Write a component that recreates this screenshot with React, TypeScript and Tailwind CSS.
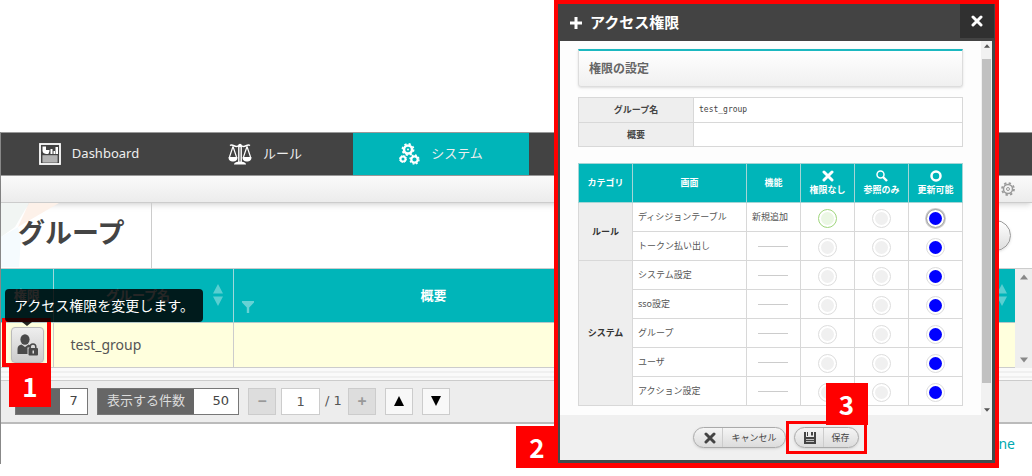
import type { ReactNode } from 'react'

const tabs = [
  { label: 'Dashboard', icon: <DashboardIcon />, active: false },
  { label: 'ルール', icon: <ScalesIcon />, active: false },
  { label: 'システム', icon: <GearsIcon />, active: true },
]

const groups = [
  { category: 'ルール', screens: ['ディシジョンテーブル', 'トークン払い出し'] },
  { category: 'システム', screens: ['システム設定', 'sso設定', 'グループ', 'ユーザ', 'アクション設定'] },
]

const levels = ['権限なし', '参照のみ', '更新可能']

function DashboardIcon() {
  return (
    <svg width="22" height="22" viewBox="0 0 22 22" fill="none">
      <rect x="1" y="1" width="20" height="20" stroke="#fff" strokeWidth="1.8" />
      <path d="M3.500 3.500h3.500v3.500h3.500a3.500 3.500 0 0 1-7 .5z" fill="#fff" />
      <path d="M6.500 11c0-2 1-3 3-3v3zM11.500 6h2v5h-2zM14.500 8h1.500v3h-1.500zM16.500 4h2.500v7h-2.500z" fill="#fff" />
      <path d="M3.500 12.500h15v6.500h-15z" fill="#999" />
      <path d="M3.500 13h15M3.500 15h15M3.500 17h15M3.500 19h15" stroke="#ccc" strokeWidth="1" />
    </svg>
  )
}

function ScalesIcon() {
  return (
    <svg width="24" height="22" viewBox="0 0 24 22" fill="none" stroke="#fff" strokeWidth="1.500">
      <path d="M2 2.500c3-2 5 2.500 8 .5h4c3 2 5-2.500 8-.5" />
      <circle cx="12" cy="2.500" r="1.800" fill="#fff" stroke="none" />
      <path d="M10.800 3v16M13.200 3v16" strokeWidth="1.400" />
      <path d="M5 3.500 1.500 14M5 3.500 8.500 14M19 3.500 15.500 14M19 3.500 22.500 14" strokeWidth="1.200" />
      <path d="M.5 14h9c0 3.500-2 4.500-4.500 4.500S.5 17.500.5 14zM14.500 14h9c0 3.500-2 4.500-4.500 4.500s-4.500-1-4.500-4.500z" fill="#fff" stroke="none" />
      <path d="M6 21.500c0-2 3-3 6-3s6 1 6 3z" fill="#fff" stroke="none" />
    </svg>
  )
}

function GearsIcon() {
  return (
    <svg width="21" height="22" viewBox="0 0 21 22" fill="none" stroke="#fff">
      <circle cx="9" cy="6.500" r="4" strokeWidth="2.500" />
      <circle cx="9" cy="6.500" r="5.600" strokeWidth="1.700" strokeDasharray="2.200 2.200" />
      <circle cx="9" cy="6.500" r="1" fill="#fff" stroke="none" />
      <circle cx="4" cy="16" r="2.500" strokeWidth="2" />
      <circle cx="4" cy="16" r="3.500" strokeWidth="1" strokeDasharray="1.400 1.350" />
      <circle cx="15.500" cy="16.500" r="3.200" strokeWidth="2.200" />
      <circle cx="15.500" cy="16.500" r="4.500" strokeWidth="1.400" strokeDasharray="1.800 1.740" />
    </svg>
  )
}

function UserLockIcon() {
  return (
    <svg width="22" height="22" viewBox="0 0 22 22" fill="#4a4a4a">
      <ellipse cx="8" cy="5.500" rx="4.600" ry="5.200" />
      <path d="M.5 20v-5c0-3 2-4 4-4.500L8 13l3.500-2.500 1.500.5v2.500h-2.500V20z" />
      <path d="M13.200 14.500v-1.700a2.800 2.800 0 0 1 5.600 0v1.700" fill="none" stroke="#4a4a4a" strokeWidth="1.500" />
      <rect x="11.500" y="14" width="9.500" height="7.500" rx="1" />
      <path d="M15.500 16.500h1.500v3h-1.500z" fill="#ddd" />
    </svg>
  )
}

function SettingIcon() {
  return (
    <svg width="14" height="14" viewBox="0 0 14 14" fill="none" stroke="#999">
      <circle cx="7" cy="7" r="4.500" strokeWidth="1.500" />
      <circle cx="7" cy="7" r="6" strokeWidth="1.800" strokeDasharray="2.350 2.360" />
      <circle cx="7" cy="7" r="1.500" />
    </svg>
  )
}

function CrossIcon({ size }: { size: number }) {
  return (
    <svg width={size} height={size} viewBox="0 0 12 12" fill="none" stroke="currentColor" strokeWidth="3" strokeLinecap="round">
      <path d="m2 2 8 8M10 2l-8 8" />
    </svg>
  )
}

function SearchIcon() {
  return (
    <svg width="12" height="12" viewBox="0 0 12 12" fill="none" stroke="#fff">
      <circle cx="4.500" cy="4.500" r="3.500" strokeWidth="1.500" />
      <path d="m7 7 4 4" strokeWidth="2.400" />
    </svg>
  )
}

function RingIcon() {
  return (
    <svg width="12" height="12" viewBox="0 0 12 12" fill="none" stroke="#fff" strokeWidth="2.500">
      <circle cx="6" cy="6" r="4.500" />
    </svg>
  )
}

function SaveIcon() {
  return (
    <svg width="12" height="12" viewBox="0 0 12 12" fill="#444">
      <path d="M0 0h2v5h8V0h2v12H0z" />
      <path d="M3 0h1v4H3zM7 0h2v3.500H7z" />
      <path d="M2 7.500h8M2 9.500h8" stroke="#ddd" strokeWidth=".8" />
    </svg>
  )
}

function SortIcon() {
  return (
    <svg width="10" height="22" viewBox="0 0 10 22" fill="#fff" opacity=".35">
      <path d="m5 0 5 9.500H0zM0 12.500h10L5 22z" />
    </svg>
  )
}

function FilterIcon() {
  return (
    <svg width="12" height="12" viewBox="0 0 12 12" fill="#fff" opacity=".4">
      <path d="M0 0h12v1.500L7.200 6.500V12H4.800V6.500L0 1.500z" />
    </svg>
  )
}

function Arrow({ down = false, size = 8, color = '#555' }: { down?: boolean; size?: number; color?: string }) {
  return (
    <svg width={size} height={size} viewBox="0 0 10 10" fill={color}>
      <path d={down ? 'M0 2h10L5 8z' : 'M0 8h10L5 2z'} />
    </svg>
  )
}

function StepBadge({ children, className }: { children: ReactNode; className: string }) {
  return (
    <span className={`absolute z-10 flex h-[42px] w-[42px] items-center justify-center bg-[#ff0000] font-['Noto_Sans_CJK_JP',sans-serif] text-[26px] leading-[26px] font-bold text-white ${className}`}>
      {children}
    </span>
  )
}

function Counter({ id, label, value, wide = false }: { id: string; label: string; value: string; wide?: boolean }) {
  return (
    <div className="flex h-[27px] border border-[#777] bg-[#666]">
      <label htmlFor={id} className="flex items-center px-[9px] text-[13px] text-[#ddd]">{label}</label>
      <input
        id={id}
        defaultValue={value}
        className={`bg-white font-['DejaVu_Sans',sans-serif] text-[13px] text-[#444] ${wide ? 'w-[44px] pr-[9px] text-right' : 'w-[27px] text-center'}`}
      />
    </div>
  )
}

function NavBar() {
  return (
    <nav className="flex h-[44px] border-y border-[#999] bg-[#434343]">
      {tabs.map(tab => (
        <a
          key={tab.label}
          href="#"
          className={`flex w-[176px] items-center justify-center gap-[11px] text-[13px] text-[#eee] ${tab.active ? 'bg-[#00b5b9]' : ''}`}
        >
          {tab.icon}
          {tab.label}
        </a>
      ))}
    </nav>
  )
}

function GroupTable() {
  return (
    <div className="flex border-t border-[#ccc]">
      <table className="flex-1 table-fixed border-collapse">
        <thead>
          <tr className="h-[53px] border-b border-[#b5c8c9] bg-[#00b5b9] text-[13px] font-bold text-white">
            <th className="w-[52px] border-r border-[#9fd9da]">権限</th>
            <th className="w-[180px] border-r border-[#9fd9da]">
              <div className="flex items-center pr-[10px]">
                <span className="flex-1 pl-[10px]">グループ名</span>
                <SortIcon />
              </div>
            </th>
            <th>
              <div className="flex items-center px-[8px]">
                <span className="pt-[24px]"><FilterIcon /></span>
                <span className="w-[350px] pl-[10px] text-center">概要</span>
                <span className="ml-auto"><SortIcon /></span>
              </div>
            </th>
          </tr>
        </thead>
        <tbody>
          <tr className="h-[45px] border-b border-[#ccc] bg-[#ffffdd]">
            <td className="relative w-[52px] border-r border-[#ccc]">
              <button
                type="button"
                aria-label="アクセス権限"
                className="ml-[10px] flex h-[36px] w-[33px] items-center justify-center rounded-[4px] border border-[#bbb] bg-linear-to-b from-[#eee] to-[#ccc] shadow"
              >
                <UserLockIcon />
              </button>
              <span className="absolute -top-[5px] left-[1px] h-[49px] w-[49px] border-4 border-[#ff0000]" />
              <div role="tooltip" className="absolute bottom-[45px] left-[4px] flex h-[33px] w-[198px] items-center rounded-[4px] bg-black/85 pl-[9px] text-[14px] whitespace-nowrap text-white">
                アクセス権限を変更します。
                <span className="absolute top-[33px] left-[17px] border-x-[5px] border-t-[4px] border-x-transparent border-t-black/85" />
              </div>
              <StepBadge className="top-[42px] left-[8px]">1</StepBadge>
            </td>
            <td className="w-[180px] border-r border-[#ccc] pl-[17px] text-[14px] text-[#555]">test_group</td>
            <td />
          </tr>
        </tbody>
      </table>
      <div className="flex w-[17px] flex-col items-center justify-between bg-[#eee] py-[4px]">
        <Arrow color="#888" />
        <Arrow down color="#888" />
      </div>
    </div>
  )
}

function Pager() {
  const button = 'flex h-[27px] w-[28px] items-center justify-center border'
  return (
    <div className="flex h-[44px] items-center gap-[9px] border-t border-b-2 border-t-[#ccc] border-b-[#bbb] bg-[#ededed] pl-[14px] text-[13px] text-[#555]">
      <Counter id="total" label="件数" value="7" />
      <Counter id="per-page" label="表示する件数" value="50" wide />
      <div className="flex items-center gap-[5px]">
        <button type="button" aria-label="前へ" className={`${button} border-[#ccc] bg-[#ddd] text-[16px] font-bold text-[#999]`}>−</button>
        <input aria-label="ページ" defaultValue="1" className="h-[27px] w-[39px] border border-[#ccc] bg-white text-center font-['DejaVu_Sans',sans-serif]" />
        <span className="w-[18px] font-['DejaVu_Sans',sans-serif] whitespace-nowrap">/ 1</span>
        <button type="button" aria-label="次へ" className={`${button} border-[#ccc] bg-[#ddd] text-[16px] font-bold text-[#999]`}>+</button>
      </div>
      <button type="button" aria-label="上へ" className={`${button} border-[#ccc] bg-[#f8f8f8]`}>
        <svg width="10" height="10" viewBox="0 0 10 10"><path d="m5 0 5 10H0z" /></svg>
      </button>
      <button type="button" aria-label="下へ" className={`${button} border-[#ccc] bg-[#f8f8f8]`}>
        <svg width="10" height="10" viewBox="0 0 10 10"><path d="M0 0h10L5 10z" /></svg>
      </button>
    </div>
  )
}

function InfoTable() {
  return (
    <table className="w-full table-fixed border-collapse text-[9px] text-[#444]">
      <tbody>
        <tr className="h-[25px]">
          <th className="w-[115px] border border-[#d8d8d8] bg-[#eee]">グループ名</th>
          <td className="border border-[#d8d8d8] bg-white pl-[5px] font-['DejaVu_Sans_Mono',monospace] text-[8px]">test_group</td>
        </tr>
        <tr className="h-[24px]">
          <th className="border border-[#d8d8d8] bg-[#eee]">概要</th>
          <td className="border border-[#d8d8d8] bg-white" />
        </tr>
      </tbody>
    </table>
  )
}

function PermissionRadio({ name, level, first }: { name: string; level: number; first: boolean }) {
  let tone = 'border-[#ddd] bg-[#f0f0f0]'
  if (level === 2)
    tone = first ? 'border-[#aaa] bg-[#0000ff] ring-1 ring-[#ccc]' : 'border-[#ddd] bg-[#0000ff]'
  else if (level === 0 && first)
    tone = 'border-[#9fd67c] bg-[#ebf7e4]'

  return (
    <input
      type="radio"
      name={name}
      aria-label={levels[level]}
      defaultChecked={level === 2}
      className={`mx-auto mt-[2px] block h-[19px] w-[19px] appearance-none rounded-full border bg-clip-content p-[2px] ${tone}`}
    />
  )
}

function PermissionTable() {
  const cell = 'border border-[#d8d8d8]'
  const icons = [<CrossIcon key="none" size={12} />, <SearchIcon key="view" />, <RingIcon key="edit" />]

  return (
    <table className="w-full table-fixed border-collapse text-[9px] leading-[12px] text-[#555]">
      <thead>
        <tr className="h-[39px] bg-[#00b5b9] font-bold text-white">
          <th className="w-[54px] border border-[#a5d5d6]">カテゴリ</th>
          <th className="w-[114px] border border-[#a5d5d6]">画面</th>
          <th className="w-[54px] border border-[#a5d5d6]">機能</th>
          {levels.map((level, i) => (
            <th key={level} className="border border-[#a5d5d6]">
              <div className="flex flex-col items-center gap-[2px]">
                {icons[i]}
                {level}
              </div>
            </th>
          ))}
        </tr>
      </thead>
      {groups.map(({ category, screens }, g) => (
        <tbody key={category} className="border-b border-[#bbb]">
          {screens.map((screen, i) => (
            <tr key={screen} className="h-[29px] bg-white">
              {i === 0 && (
                <th rowSpan={screens.length} className={`${cell} bg-[#eee] text-[#333]`}>{category}</th>
              )}
              <td className={`${cell} pl-[5px]`}>{screen}</td>
              <td className={`${cell} pl-[5px]`}>
                {g === 0 && i === 0 ? '新規追加' : <hr className="ml-[6px] w-[30px] border-[#ccc]" />}
              </td>
              {levels.map((level, n) => (
                <td key={level} className={cell}>
                  <PermissionRadio name={screen} level={n} first={g === 0 && i === 0} />
                </td>
              ))}
            </tr>
          ))}
        </tbody>
      ))}
    </table>
  )
}

function PillButton({ icon, label }: { icon: ReactNode; label: string }) {
  return (
    <button type="button" className="flex h-[21px] items-center rounded-full border border-[#aaa] bg-linear-to-b from-[#f5f5f5] to-[#dcdcdc] text-[9px] text-[#444] shadow-sm">
      <span className="flex h-full w-[29px] items-center justify-center border-r border-[#ccc] pl-[3px]">{icon}</span>
      <span className="px-[8px]">{label}</span>
    </button>
  )
}

function AccessDialog() {
  return (
    <div role="dialog" aria-labelledby="access-title" className="absolute top-0 right-[33px] w-[445px] border-4 border-b-[5px] border-[#ff0000] bg-[#404b4c]">
      <header className="flex h-[37px] bg-[#434343] text-white">
        <h2 id="access-title" className="flex flex-1 items-center gap-[8px] pl-[12px] text-[15px] font-bold">
          <svg width="12" height="12" viewBox="0 0 12 12" fill="#fff"><path d="M4.500 0h3v4.500H12v3H7.500V12h-3V7.500H0v-3h4.500z" /></svg>
          アクセス権限
        </h2>
        <button type="button" aria-label="閉じる" className="mr-px flex h-[34px] w-[34px] items-center justify-center bg-[#303030]">
          <CrossIcon size={12} />
        </button>
      </header>

      <div className="mr-[3px] mb-[3px] ml-[2px]">
        <div className="flex bg-[#fdfdfd]">
          <div className="flex-1 px-[18px] pt-[8px] pb-[9px]">
            <h3 className="mb-[10px] flex h-[38px] items-center rounded-b-[3px] border border-t-2 border-[#ddd] border-t-[#1cb8c0] bg-linear-to-b from-white to-[#f0f0f0] pl-[10px] text-[12px] font-bold text-[#666] shadow-sm">
              権限の設定
            </h3>
            <InfoTable />
            <div className="mt-[16px]">
              <PermissionTable />
            </div>
          </div>
          <div className="flex w-[11px] flex-col items-center bg-[#f1f1f1] py-[2px]">
            <Arrow size={6} />
            <div className="mt-[10px] mb-[24px] w-[9px] flex-1 bg-[#c1c1c1]" />
            <Arrow down size={6} />
          </div>
        </div>
        <footer className="flex h-[45px] items-center justify-center gap-[8px] bg-[#f0f0f0]">
          <PillButton icon={<CrossIcon size={12} />} label="キャンセル" />
          <div className="relative">
            <PillButton icon={<SaveIcon />} label="保存" />
            <span className="absolute -inset-x-[8px] -inset-y-[6px] border-[3px] border-[#ff0000]" />
            <StepBadge className="right-[-9px] bottom-[23px]">3</StepBadge>
          </div>
        </footer>
      </div>
      <StepBadge className="-bottom-[5px] -left-[42px]">2</StepBadge>
    </div>
  )
}

export default function App() {
  return (
    <div className="relative min-h-screen overflow-hidden bg-white font-['Noto_Sans','Noto_Sans_CJK_JP',sans-serif]">
      <div className="mt-[132px] border-l border-[#888]">
        <NavBar />
        <div className="flex h-[27px] items-center justify-end border-b border-[#ccc] bg-linear-to-b from-[#fafafa] to-[#ececec] pr-[17px] shadow-md">
          <a href="#" aria-label="設定"><SettingIcon /></a>
        </div>
        <div className="flex h-[65px] items-center justify-between">
          <h1 className="relative flex h-full w-[151px] items-center border-r border-[#ccc] pb-[4px] pl-[17px] text-[27px] font-bold text-[#444]">
            <svg className="absolute top-0 left-0" width="60" height="65" viewBox="0 0 60 65">
              <path d="M0 0h28L14 24 0 34z" fill="#f1f5f3" />
              <path d="M28 0h30L17 24z" fill="#fdf1e9" />
              <path d="m0 34 17-10 3 12-2 28H0z" fill="#f5fbfe" />
            </svg>
            <span className="relative">グループ</span>
          </h1>
          <button type="button" aria-label="新規追加" className="mr-[21px] h-[31px] w-[80px] rounded-full border border-[#999] bg-linear-to-b from-white to-[#ddd] shadow" />
        </div>
        <GroupTable />
        <div className="h-[12px] bg-[repeating-linear-gradient(#fafafa_0_3px,#f0f0f0_3px_5px)]" />
        <Pager />
        <div className="flex h-[40px] items-center justify-end pr-[17px] text-[14px] text-[#00a9b0]">
          <a href="#">ne</a>
        </div>
      </div>
      <AccessDialog />
    </div>
  )
}
